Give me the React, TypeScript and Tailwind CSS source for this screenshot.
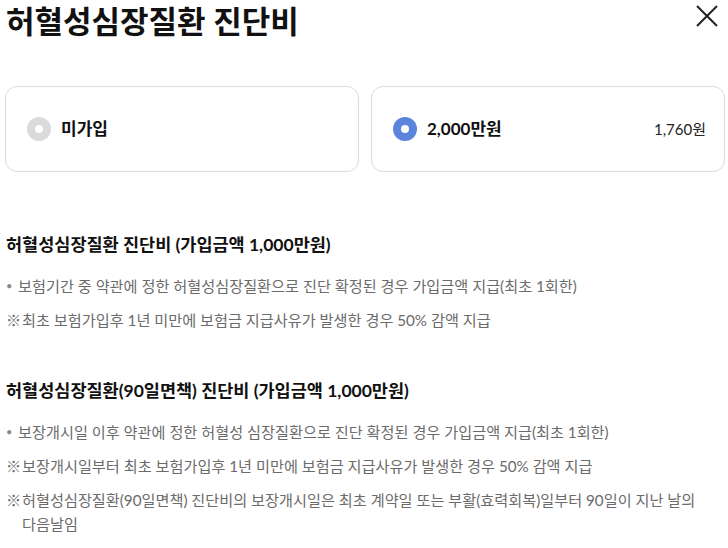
import { useState } from "react";

const font = { fontFamily: "Lato, 'Noto Sans CJK KR', sans-serif" };

type Option = { id: string; label: string; price?: string };

const options: Option[] = [
  { id: "none", label: "미가입" },
  { id: "2000", label: "2,000만원", price: "1,760원" },
];

type Note = { mark: "dot" | "ref"; text: string };

const sections: { title: string; notes: Note[] }[] = [
  {
    title: "허혈성심장질환 진단비 (가입금액 1,000만원)",
    notes: [
      {
        mark: "dot",
        text: "보험기간 중 약관에 정한 허혈성심장질환으로 진단 확정된 경우 가입금액 지급(최초 1회한)",
      },
      {
        mark: "ref",
        text: "최초 보험가입후 1년 미만에 보험금 지급사유가 발생한 경우 50% 감액 지급",
      },
    ],
  },
  {
    title: "허혈성심장질환(90일면책) 진단비 (가입금액 1,000만원)",
    notes: [
      {
        mark: "dot",
        text: "보장개시일 이후 약관에 정한 허혈성 심장질환으로 진단 확정된 경우 가입금액 지급(최초 1회한)",
      },
      {
        mark: "ref",
        text: "보장개시일부터 최초 보험가입후 1년 미만에 보험금 지급사유가 발생한 경우 50% 감액 지급",
      },
      {
        mark: "ref",
        text: "허혈성심장질환(90일면책) 진단비의 보장개시일은 최초 계약일 또는 부활(효력회복)일부터 90일이 지난 날의 다음날임",
      },
    ],
  },
];

function App() {
  const [selected, setSelected] = useState("2000");

  return (
    <div style={font} className="w-[728px] h-[548px] overflow-hidden bg-white text-[#111]">
      <div className="flex items-start justify-between pl-[6px] pr-[10px] pt-[1px]">
        <h1 className="text-[31px] font-bold leading-[40px]">허혈성심장질환 진단비</h1>
        <button className="mt-[4px] p-0 text-[#222]" aria-label="닫기">
          <svg width="22" height="22" viewBox="0 0 22 22" fill="none">
            <path d="M1 1 L21 21 M21 1 L1 21" stroke="currentColor" strokeWidth="2" />
          </svg>
        </button>
      </div>

      <div className="flex gap-[12px] pl-[5px] mt-[45px]">
        {options.map((opt) => {
          const isSelected = selected === opt.id;
          return (
            <button
              key={opt.id}
              onClick={() => setSelected(opt.id)}
              className="flex h-[86px] w-[354px] items-center justify-between rounded-[12px] border border-[#dcdcdc] bg-white pl-[21px] pr-[18px]"
            >
              <span className="flex items-center gap-[10px]">
                <span
                  className={`flex h-[24px] w-[24px] items-center justify-center rounded-full ${isSelected ? "bg-[#5b84dc]" : "bg-[#d9dadc]"}`}
                >
                  <span className="h-[8px] w-[8px] rounded-full bg-white" />
                </span>
                <span className="text-[17px] font-bold">{opt.label}</span>
              </span>
              {opt.price && <span className="text-[15px] text-[#222]">{opt.price}</span>}
            </button>
          );
        })}
      </div>

      <div className="px-[6px] pt-[60px]">
        {sections.map((section, i) => (
          <section key={i} className={i > 0 ? "mt-[46px]" : ""}>
            <h2 className="text-[17.5px] font-bold leading-[26px] text-[#111]">{section.title}</h2>
            <ul className="mt-[16px] flex flex-col gap-[10px] text-[15.2px] leading-[24px] text-[#6b6b6b] break-keep">
              {section.notes.map((note, j) => (
                <li key={j} className="flex">
                  {note.mark === "dot" ? (
                    <span className="w-[12px] shrink-0 text-[11px] text-[#888]">•</span>
                  ) : (
                    <span className="w-[16px] shrink-0">※</span>
                  )}
                  <span>{note.text}</span>
                </li>
              ))}
            </ul>
          </section>
        ))}
      </div>
    </div>
  );
}

export default App;
